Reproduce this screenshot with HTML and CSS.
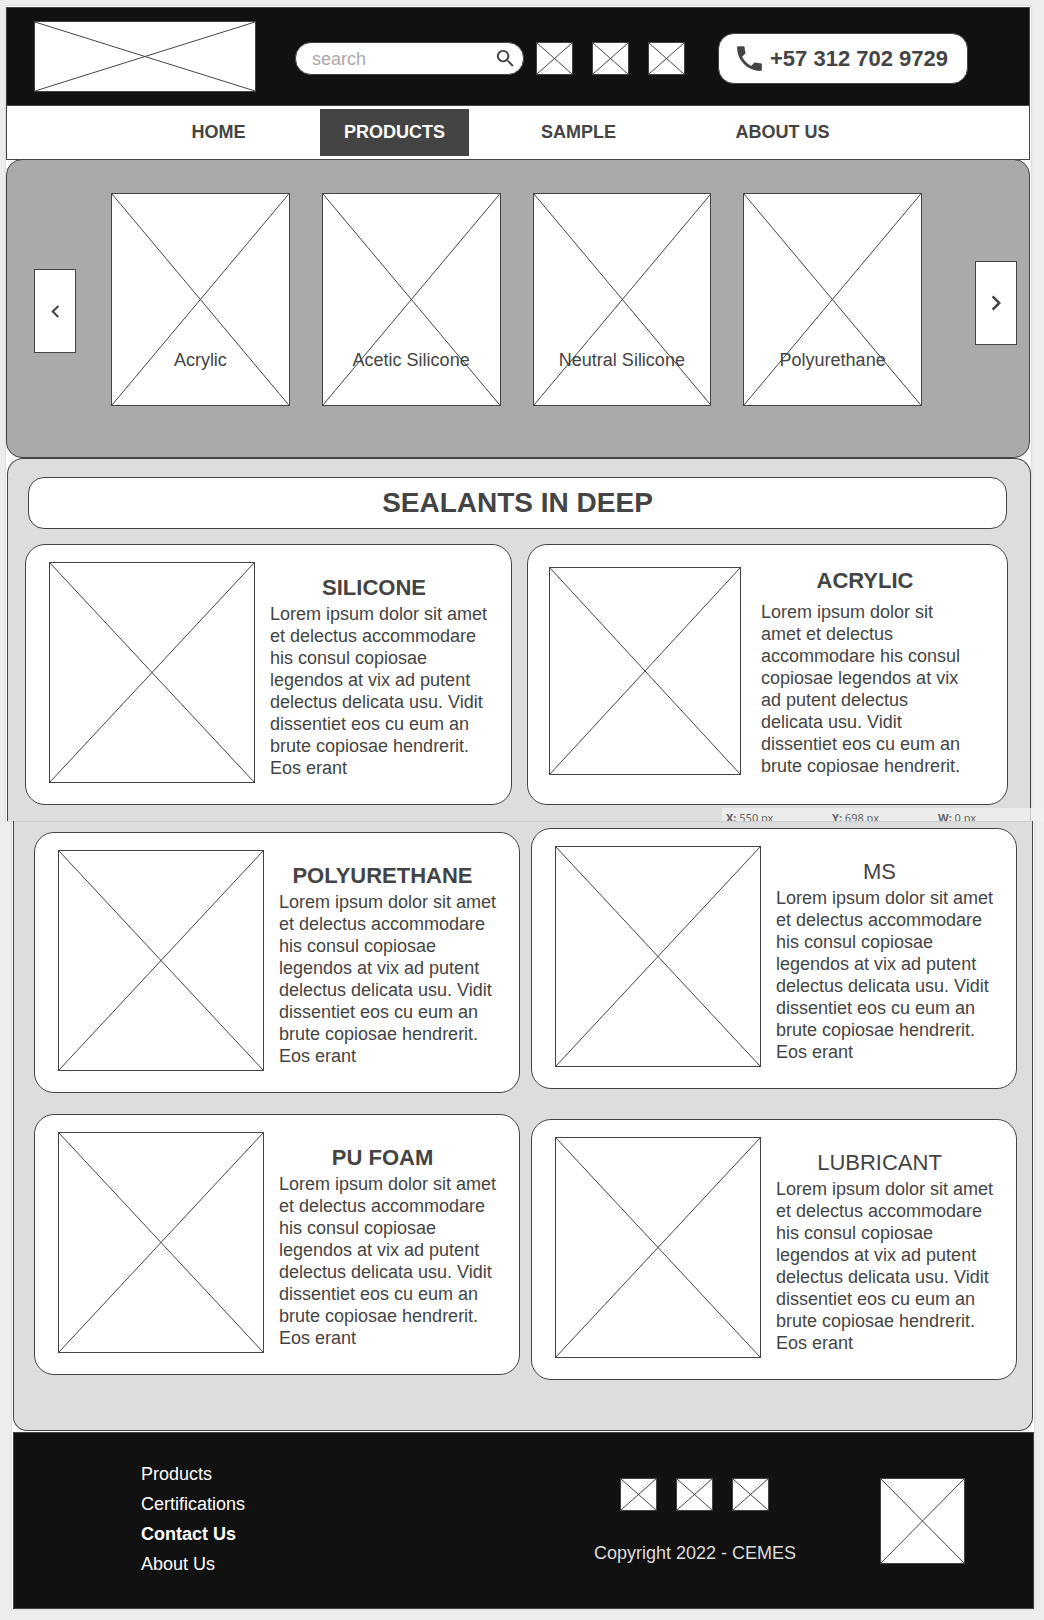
FILE: index.html
```html
<!DOCTYPE html>
<html lang="en">
<head>
<meta charset="utf-8">
<meta name="viewport" content="width=device-width, initial-scale=1">
<title>CEMES - Products</title>
<link rel="stylesheet" href="styles.css">
</head>
<body>
<svg class="defs" aria-hidden="true">
  <symbol id="cross" viewBox="0 0 100 100" preserveAspectRatio="none">
    <path d="M0 0L100 100M100 0L0 100" vector-effect="non-scaling-stroke"/>
  </symbol>
</svg>

<div class="sheet sheet-top">
  <header class="header">
    <svg class="ph logo" role="img" aria-label="Logo"><use href="#cross"/></svg>
    <div class="tools">
      <form class="search">
        <input class="search-input" type="text" placeholder="search" aria-label="search">
        <button class="search-button" type="button" aria-label="search">
          <svg class="icon-search" viewBox="0 0 24 24"><path d="M15.5 14h-.79l-.28-.27C15.41 12.59 16 11.11 16 9.5 16 5.91 13.09 3 9.5 3S3 5.91 3 9.5 5.91 16 9.5 16c1.61 0 3.09-.59 4.23-1.57l.27.28v.79l5 4.99L20.49 19l-4.99-5zm-6 0C7.01 14 5 11.99 5 9.5S7.01 5 9.5 5 14 7.01 14 9.5 11.99 14 9.5 14z"/></svg>
        </button>
      </form>
      <div class="social">
        <svg class="ph"><use href="#cross"/></svg>
        <svg class="ph"><use href="#cross"/></svg>
        <svg class="ph"><use href="#cross"/></svg>
      </div>
      <a class="phone" href="tel:+573127029729">
        <svg class="icon-phone" viewBox="0 0 24 24"><path d="M6.62 10.79c1.44 2.83 3.76 5.14 6.59 6.59l2.2-2.2c.27-.27.67-.36 1.02-.24 1.12.37 2.33.57 3.57.57.55 0 1 .45 1 1V20c0 .55-.45 1-1 1-9.39 0-17-7.61-17-17 0-.55.45-1 1-1h3.5c.55 0 1 .45 1 1 0 1.25.2 2.45.57 3.57.11.35.03.74-.25 1.02l-2.2 2.2z"/></svg>
        +57 312 702 9729
      </a>
    </div>
  </header>

  <nav class="nav">
    <a class="nav-link" href="#">HOME</a>
    <a class="nav-link nav-current" href="#">PRODUCTS</a>
    <a class="nav-link nav-sample" href="#">SAMPLE</a>
    <a class="nav-link nav-about" href="#">ABOUT US</a>
  </nav>

  <section class="carousel">
    <button class="arrow arrow-prev" type="button" aria-label="Previous">
      <svg viewBox="0 0 24 24"><path d="M15.41 7.41L14 6l-6 6 6 6 1.41-1.41L10.83 12z"/></svg>
    </button>
    <div class="slides">
      <figure class="slide"><svg class="ph"><use href="#cross"/></svg><figcaption>Acrylic</figcaption></figure>
      <figure class="slide"><svg class="ph"><use href="#cross"/></svg><figcaption>Acetic Silicone</figcaption></figure>
      <figure class="slide"><svg class="ph"><use href="#cross"/></svg><figcaption>Neutral Silicone</figcaption></figure>
      <figure class="slide"><svg class="ph"><use href="#cross"/></svg><figcaption>Polyurethane</figcaption></figure>
    </div>
    <button class="arrow arrow-next" type="button" aria-label="Next">
      <svg viewBox="0 0 24 24"><path d="M10 6L8.590 7.410 13.170 12l-4.580 4.590L10 18l6-6z"/></svg>
    </button>
  </section>

  <section class="panel panel-top">
    <h1 class="title">SEALANTS IN DEEP</h1>
    <div class="pair">
      <article class="card">
        <svg class="ph card-image"><use href="#cross"/></svg>
        <div class="card-body">
          <h2 class="card-title">SILICONE</h2>
          <p class="card-text">Lorem ipsum dolor sit amet et delectus accommodare his consul copiosae legendos at vix ad putent delectus delicata usu. Vidit dissentiet eos cu eum an brute copiosae hendrerit. Eos erant</p>
        </div>
      </article>
      <article class="card card-compact">
        <svg class="ph card-image"><use href="#cross"/></svg>
        <div class="card-body">
          <h2 class="card-title">ACRYLIC</h2>
          <p class="card-text">Lorem ipsum dolor sit amet et delectus accommodare his consul copiosae legendos at vix ad putent delectus delicata usu. Vidit dissentiet eos cu eum an brute copiosae hendrerit.</p>
        </div>
      </article>
    </div>
    <div class="status">
      <span><b>X:</b> 550 px</span>
      <span><b>Y:</b> 698 px</span>
      <span><b>W:</b> 0 px</span>
    </div>
  </section>
</div>

<div class="sheet sheet-bottom">
  <section class="panel panel-bottom">
    <div class="column">
      <article class="card">
        <svg class="ph card-image"><use href="#cross"/></svg>
        <div class="card-body">
          <h2 class="card-title">POLYURETHANE</h2>
          <p class="card-text">Lorem ipsum dolor sit amet et delectus accommodare his consul copiosae legendos at vix ad putent delectus delicata usu. Vidit dissentiet eos cu eum an brute copiosae hendrerit. Eos erant</p>
        </div>
      </article>
      <article class="card">
        <svg class="ph card-image"><use href="#cross"/></svg>
        <div class="card-body">
          <h2 class="card-title">PU FOAM</h2>
          <p class="card-text">Lorem ipsum dolor sit amet et delectus accommodare his consul copiosae legendos at vix ad putent delectus delicata usu. Vidit dissentiet eos cu eum an brute copiosae hendrerit. Eos erant</p>
        </div>
      </article>
    </div>
    <div class="column column-wide-gap">
      <article class="card">
        <svg class="ph card-image"><use href="#cross"/></svg>
        <div class="card-body">
          <h2 class="card-title card-title-light">MS</h2>
          <p class="card-text">Lorem ipsum dolor sit amet et delectus accommodare his consul copiosae legendos at vix ad putent delectus delicata usu. Vidit dissentiet eos cu eum an brute copiosae hendrerit. Eos erant</p>
        </div>
      </article>
      <article class="card">
        <svg class="ph card-image"><use href="#cross"/></svg>
        <div class="card-body">
          <h2 class="card-title card-title-light">LUBRICANT</h2>
          <p class="card-text">Lorem ipsum dolor sit amet et delectus accommodare his consul copiosae legendos at vix ad putent delectus delicata usu. Vidit dissentiet eos cu eum an brute copiosae hendrerit. Eos erant</p>
        </div>
      </article>
    </div>
  </section>

  <footer class="footer">
    <ul class="footer-links">
      <li><a href="#">Products</a></li>
      <li><a href="#">Certifications</a></li>
      <li><a class="strong" href="#">Contact Us</a></li>
      <li><a href="#">About Us</a></li>
    </ul>
    <div class="footer-center">
      <div class="social">
        <svg class="ph"><use href="#cross"/></svg>
        <svg class="ph"><use href="#cross"/></svg>
        <svg class="ph"><use href="#cross"/></svg>
      </div>
      <p class="copyright">Copyright 2022 - CEMES</p>
    </div>
    <svg class="ph badge"><use href="#cross"/></svg>
  </footer>
</div>
</body>
</html>
```
FILE: styles.css
```css
* {
  box-sizing: border-box;
}

body {
  margin: 0;
  padding: 6px 0 10px;
  background: #ededed;
  color: #444;
  font-family: "Liberation Sans", Arial, sans-serif;
  font-size: 18px;
  line-height: 22px;
}

h1, h2, p, ul, figure {
  margin: 0;
  padding: 0;
}

a {
  color: inherit;
  text-decoration: none;
}

button {
  padding: 0;
  border: 0;
  background: none;
}

svg {
  display: block;
  fill: #444;
}

.defs {
  position: absolute;
  width: 0;
  height: 0;
}

/* Image placeholder: a bordered box with both diagonals */
.ph {
  flex: none;
  border: 1px solid #444;
  background: #fff;
  fill: none;
  stroke: #444;
  stroke-width: 1px;
}

.sheet {
  background: #fff;
  box-shadow: 0 0 2px rgba(0, 0, 0, 0.2);
}

.sheet-top {
  position: relative;
  z-index: 1;
  margin: 0 13px 0 6px;
  padding-top: 1px;
}

.sheet-bottom {
  margin: 0 10px 0 12px;
}

/* Header */
.header {
  display: flex;
  align-items: center;
  margin-right: 1px;
  padding: 13px 61px 13px 27px;
  border: 1px solid #444;
  background: #111;
}

.logo {
  width: 222px;
  height: 71px;
}

.tools {
  display: flex;
  flex: 1;
  align-items: center;
  min-width: 0;
  padding: 4px 0 0 39px;
}

.search {
  display: flex;
  flex: 1;
  align-items: center;
  min-width: 0;
  height: 33px;
  margin-right: 12px;
  padding: 0 6px 0 16px;
  border: 1px solid #444;
  border-radius: 16px;
  background: #fff;
}

.search-input {
  flex: 1;
  min-width: 0;
  padding: 0;
  border: 0;
  outline: 0;
  background: none;
  color: #444;
  font: inherit;
}

.search-input::placeholder {
  color: #aaa;
  opacity: 1;
}

.icon-search {
  width: 23px;
  height: 23px;
}

.social {
  display: flex;
  gap: 19px;
}

.social .ph {
  width: 37px;
  height: 33px;
}

.phone {
  display: flex;
  flex: none;
  align-items: center;
  gap: 4px;
  width: 250px;
  height: 51px;
  margin-left: 33px;
  padding-left: 14px;
  border: 1px solid #444;
  border-radius: 16px;
  background: #fff;
  font-size: 22px;
  font-weight: bold;
  white-space: nowrap;
}

.icon-phone {
  width: 33px;
  height: 33px;
}

/* Navigation */
.nav {
  display: flex;
  gap: 27px;
  margin: -1px 1px 0 0;
  padding: 3px 0 3px 137px;
  border: 1px solid #444;
}

.nav-link {
  width: 149px;
  line-height: 47px;
  font-weight: bold;
  text-align: center;
}

.nav-current {
  background: #444;
  color: #fff;
}

.nav-sample {
  margin-left: 8px;
}

.nav-about {
  margin-left: 28px;
}

/* Carousel */
.carousel {
  display: flex;
  align-items: flex-start;
  margin: -1px 1px 0 0;
  padding: 33px 12px 51px 27px;
  border: 1px solid #444;
  border-radius: 16px;
  background: #aaa;
}

.slides {
  display: grid;
  flex: 1;
  grid-template-columns: repeat(4, 1fr);
  gap: 32px;
  margin: 0 53px 0 35px;
}

.slide {
  display: grid;
}

.slide .ph,
.slide figcaption {
  grid-area: 1 / 1;
}

.slide .ph {
  width: 100%;
  height: 213px;
}

.slide figcaption {
  align-self: end;
  padding-bottom: 35px;
  text-align: center;
}

.arrow {
  display: flex;
  flex: none;
  align-items: center;
  justify-content: center;
  width: 42px;
  height: 84px;
  border: 1px solid #444;
  background: #fff;
}

.arrow-prev {
  margin-top: 76px;
}

.arrow-prev svg {
  width: 25px;
  height: 25px;
}

.arrow-next {
  margin-top: 68px;
}

.arrow-next svg {
  width: 30px;
  height: 30px;
}

/* Product panels */
.panel {
  border: 1px solid #444;
  background: #ddd;
}

.panel-top {
  position: relative;
  margin-left: 1px;
  padding: 18px 22px 16px 17px;
  border-bottom: 0;
  border-radius: 16px 16px 0 0;
}

.panel-bottom {
  display: grid;
  grid-template-columns: 1fr 1fr;
  column-gap: 11px;
  margin: 0 1px;
  padding: 0 15px 50px 20px;
  border-top: 0;
  border-radius: 0 0 14px 14px;
}

.title {
  margin: 0 1px 15px 3px;
  border: 1px solid #444;
  border-radius: 16px;
  background: #fff;
  font-size: 28px;
  line-height: 50px;
  text-align: center;
}

.pair {
  display: grid;
  grid-template-columns: 487fr 481fr;
  column-gap: 15px;
}

.column {
  display: flex;
  flex-direction: column;
  gap: 21px;
  padding-top: 11px;
}

.column-wide-gap {
  gap: 30px;
  padding-top: 7px;
}

.card {
  display: flex;
  gap: 15px;
  padding: 17px 15px 21px 23px;
  border: 1px solid #444;
  border-radius: 20px;
  background: #fff;
}

.card-image {
  width: 206px;
  height: 221px;
}

.card-body {
  flex: 1;
  padding-top: 12px;
}

.card-title {
  padding-right: 18px;
  font-size: 22px;
  line-height: 28px;
  text-align: center;
}

.card-title-light {
  font-weight: normal;
}

.card-text {
  margin-top: 1px;
}

.card-compact {
  gap: 20px;
  padding: 22px 38px 22px 21px;
}

.card-compact .card-image {
  width: 192px;
  height: 208px;
}

.card-compact .card-body {
  padding-top: 0;
}

.card-compact .card-title {
  padding-right: 0;
}

.card-compact .card-text {
  margin-top: 6px;
}

/* Coordinate readout that lies over the edge of the panel */
.status {
  position: absolute;
  right: -14px;
  bottom: 0;
  display: grid;
  grid-template-columns: repeat(3, 106px);
  width: 322px;
  height: 13px;
  padding-left: 4px;
  overflow: hidden;
  background: rgba(240, 240, 240, 0.8);
  color: #666;
  font-family: "Noto Sans", "Open Sans", sans-serif;
  font-size: 11px;
  line-height: 19px;
}

/* Footer */
.footer {
  display: flex;
  align-items: flex-start;
  margin: 1px 0 0 1px;
  padding: 30px 68px 33px 127px;
  border: 1px solid #444;
  background: #111;
  color: #fff;
}

.footer-links {
  display: grid;
  gap: 8px;
  margin-right: auto;
  list-style: none;
}

.footer-links .strong {
  font-weight: bold;
}

.footer-center {
  display: flex;
  flex-direction: column;
  align-items: center;
  gap: 31px;
  margin: 15px 84px 0 0;
}

.copyright {
  color: #ddd;
}

.badge {
  width: 85px;
  height: 86px;
  margin-top: 15px;
}
```
